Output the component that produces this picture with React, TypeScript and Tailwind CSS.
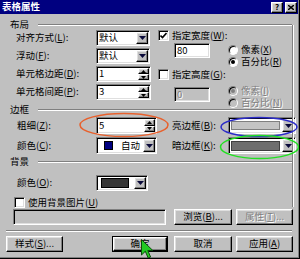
import React from 'react';

const sunken =
  'border border-t-[#808080] border-l-[#808080] border-r-white border-b-white shadow-[inset_1px_1px_0_#000,inset_-1px_-1px_0_#dfdfdf]';
const raised =
  'border border-t-white border-l-white border-r-black border-b-black shadow-[inset_-1px_-1px_0_#808080,inset_1px_1px_0_#dfdfdf]';
const disabledText = 'text-[#808080] [text-shadow:1px_1px_0_#fff]';

const L = ({ t, k, colon = true }: { t: string; k: string; colon?: boolean }) => (
  <span className="whitespace-nowrap">
    {t}(<span className="underline">{k}</span>){colon ? ':' : ''}
  </span>
);

const Etch = ({ w }: { w: string }) => (
  <div className={`h-[2px] border-t border-t-[#808080] border-b border-b-white ${w}`} />
);

const DownArrow = () => (
  <svg width="7" height="4" viewBox="0 0 7 4">
    <path d="M0 0h7L3.5 4z" fill="#0a0a3a" />
  </svg>
);

const DropBtn = () => (
  <div className={`${raised} bg-[#c0c0c0] w-[12px] h-full flex items-center justify-center shrink-0`}>
    <DownArrow />
  </div>
);

const Select = ({ w, children }: { w: string; children: React.ReactNode }) => (
  <div className={`${sunken} bg-white p-[1px] flex h-full ${w}`}>
    <div className="flex-1 flex items-center pl-[1px]">{children}</div>
    <DropBtn />
  </div>
);

const Spin = ({ w, v }: { w: string; v: string }) => (
  <div className={`${sunken} bg-white p-[1px] flex h-full ${w}`}>
    <div className="flex-1 flex items-center pl-[1px]">{v}</div>
    <div className="w-[11px] flex flex-col">
      <div className={`${raised} bg-[#c0c0c0] flex-1 flex items-center justify-center`}>
        <svg width="5" height="3" viewBox="0 0 5 3">
          <path d="M2.5 0L5 3H0z" fill="#000" />
        </svg>
      </div>
      <div className={`${raised} bg-[#c0c0c0] flex-1 flex items-center justify-center`}>
        <svg width="5" height="3" viewBox="0 0 5 3">
          <path d="M0 0h5L2.5 3z" fill="#000" />
        </svg>
      </div>
    </div>
  </div>
);

const Check = ({ on }: { on?: boolean }) => (
  <div className={`${sunken} bg-white w-[11px] h-[11px] flex items-center justify-center shrink-0`}>
    {on && (
      <svg width="7" height="7" viewBox="0 0 7 7">
        <path d="M0.5 3.5L2.5 5.5L6.5 1" stroke="#000" strokeWidth="1.6" fill="none" />
      </svg>
    )}
  </div>
);

const Radio = ({ on, dis }: { on?: boolean; dis?: boolean }) => (
  <div
    className={`w-[10px] h-[10px] rounded-full border border-t-[#808080] border-l-[#808080] border-r-white border-b-white shadow-[inset_1px_1px_0_#000] flex items-center justify-center shrink-0 ${
      dis ? 'bg-[#c0c0c0]' : 'bg-white'
    }`}
  >
    {on && <div className={`w-[4px] h-[4px] rounded-full ${dis ? 'bg-[#808080]' : 'bg-black'}`} />}
  </div>
);

const Btn = ({ w, children, dis, def }: { w: string; children: React.ReactNode; dis?: boolean; def?: boolean }) =>
  def ? (
    <div className={`border border-black h-full ${w}`}>
      <div className={`${raised} bg-[#c0c0c0] h-full flex items-center justify-center`}>{children}</div>
    </div>
  ) : (
    <div className={`${raised} bg-[#c0c0c0] h-full flex items-center justify-center ${w} ${dis ? disabledText : ''}`}>
      {children}
    </div>
  );

export default function App() {
  return (
    <div className="w-[300px] h-[259px] bg-[#c0c0c0] overflow-hidden relative border-r border-b border-black text-[9.5px] leading-none text-black font-['Noto_Sans_CJK_SC',sans-serif]">
      <div className="h-full border-r border-b border-[#808080] flex flex-col">
        {/* title bar */}
        <div className="h-[14px] bg-[#000080] flex items-center shrink-0">
          <span className="ml-[2px] text-white font-bold">表格属性</span>
          <div className="ml-auto mr-[1px] flex gap-[2px]">
            <div className={`${raised} bg-[#c0c0c0] w-[12px] h-[11px] flex items-center justify-center font-bold text-[8px]`}>
              ?
            </div>
            <div className={`${raised} bg-[#c0c0c0] w-[12px] h-[11px] flex items-center justify-center`}>
              <svg width="6" height="5" viewBox="0 0 6 5">
                <path d="M0 0L6 5M6 0L0 5" stroke="#000" strokeWidth="1.4" />
              </svg>
            </div>
          </div>
        </div>

        {/* 布局 */}
        <div className="mt-[6px] h-[10px] flex items-center shrink-0">
          <span className="ml-[10px] w-[28px]">布局</span>
          <Etch w="w-[254px]" />
        </div>
        <div className="flex h-[75px] shrink-0">
          <div className="w-[158px] pl-[16px] flex flex-col gap-[2px]">
            <div className="flex items-center h-[16px]">
              <div className="w-[80px]">
                <L t="对齐方式" k="L" />
              </div>
              <Select w="w-[54px]">默认</Select>
            </div>
            <div className="flex items-center h-[16px]">
              <div className="w-[80px]">
                <L t="浮动" k="F" />
              </div>
              <Select w="w-[54px]">默认</Select>
            </div>
            <div className="flex items-center h-[16px]">
              <div className="w-[80px]">
                <L t="单元格边距" k="D" />
              </div>
              <Spin w="w-[55px]" v="1" />
            </div>
            <div className="flex items-center h-[16px]">
              <div className="w-[80px]">
                <L t="单元格间距" k="P" />
              </div>
              <Spin w="w-[55px]" v="3" />
            </div>
          </div>
          <div className="flex flex-col">
            <div className="h-[11px] flex items-center gap-[3px]">
              <Check on />
              <L t="指定宽度" k="W" />
            </div>
            <div className="mt-[2px] flex">
              <div className={`${sunken} bg-white ml-[16px] w-[36px] h-[15px] flex items-center pl-[2px]`}>80</div>
              <div className="ml-[18px] mt-[1px] flex flex-col">
                <div className="h-[12px] flex items-center gap-[3px]">
                  <Radio />
                  <L t="像素" k="X" colon={false} />
                </div>
                <div className="h-[12px] flex items-center gap-[3px]">
                  <Radio on />
                  <L t="百分比" k="R" colon={false} />
                </div>
              </div>
            </div>
            <div className="mt-[1px] h-[11px] flex items-center gap-[3px]">
              <Check />
              <L t="指定高度" k="G" />
            </div>
            <div className="mt-[5px] flex">
              <div
                className={`${sunken} bg-[#c0c0c0] ml-[16px] mt-[2px] w-[36px] h-[15px] flex items-center pl-[2px] ${disabledText}`}
              >
                0
              </div>
              <div className={`ml-[18px] flex flex-col ${disabledText}`}>
                <div className="h-[12px] flex items-center gap-[3px]">
                  <Radio on dis />
                  <L t="像素" k="I" colon={false} />
                </div>
                <div className="h-[12px] flex items-center gap-[3px]">
                  <Radio dis />
                  <L t="百分比" k="N" colon={false} />
                </div>
              </div>
            </div>
          </div>
        </div>

        {/* 边框 */}
        <div className="h-[10px] flex items-center shrink-0">
          <span className="ml-[10px] w-[28px]">边框</span>
          <Etch w="w-[254px]" />
        </div>
        <div className="mt-[2px] h-[17px] flex items-center pl-[17px] shrink-0">
          <div className="w-[79px]">
            <L t="粗细" k="Z" />
          </div>
          <Spin w="w-[61px]" v="5" />
          <div className="ml-[15px] w-[56px]">
            <L t="亮边框" k="B" />
          </div>
          <Select w="w-[68px]">
            <div className="w-full h-[9px] mr-[2px] bg-[#c4c4c4] border border-[#808080]" />
          </Select>
        </div>
        <div className="mt-[3px] h-[17px] flex items-center pl-[17px] shrink-0">
          <div className="w-[79px]">
            <L t="颜色" k="C" />
          </div>
          <Select w="w-[61px]">
            <div className="ml-[5px] w-[9px] h-[9px] bg-[#000080] border border-black" />
            <span className="ml-[8px]">自动</span>
          </Select>
          <div className="ml-[15px] w-[56px]">
            <L t="暗边框" k="K" />
          </div>
          <Select w="w-[68px]">
            <div className="w-full h-[10px] mr-[2px] bg-[#6e6e6e] border border-[#404040]" />
          </Select>
        </div>

        {/* 背景 */}
        <div className="mt-[3px] h-[10px] flex items-center shrink-0">
          <span className="ml-[10px] w-[28px]">背景</span>
          <Etch w="w-[254px]" />
        </div>
        <div className="mt-[8px] h-[16px] flex items-center pl-[17px] shrink-0">
          <div className="w-[79px]">
            <L t="颜色" k="O" />
          </div>
          <Select w="w-[52px]">
            <div className="ml-[2px] w-[28px] h-[10px] bg-[#353535] border border-black" />
          </Select>
        </div>
        <div className="mt-[6px] h-[11px] flex items-center gap-[3px] pl-[14px] shrink-0">
          <Check />
          <L t="使用背景图片" k="U" colon={false} />
        </div>
        <div className="mt-[1px] h-[16px] flex pl-[13px] shrink-0">
          <div className={`${sunken} bg-[#c0c0c0] w-[153px] h-full`} />
          <div className="ml-[8px] h-full">
            <Btn w="w-[58px]">
              <L t="浏览" k="B" colon={false} />
              ...
            </Btn>
          </div>
          <div className="ml-[4px] h-full">
            <Btn w="w-[57px]" dis>
              <L t="属性" k="T" colon={false} />
              ...
            </Btn>
          </div>
        </div>

        <div className="mt-[5px] pl-[6px] shrink-0">
          <Etch w="w-[286px]" />
        </div>

        <div className="mt-[4px] h-[16px] flex pl-[6px] shrink-0">
          <Btn w="w-[57px]">
            <L t="样式" k="S" colon={false} />
            ...
          </Btn>
          <div className="ml-[49px] h-full">
            <Btn w="w-[56px]" def>
              确定
            </Btn>
          </div>
          <div className="ml-[6px] h-full">
            <Btn w="w-[58px]">取消</Btn>
          </div>
          <div className="ml-[4px] h-full">
            <Btn w="w-[57px]">
              <L t="应用" k="A" colon={false} />
            </Btn>
          </div>
        </div>
      </div>

      {/* group frame right edge */}
      <div className="absolute left-[292px] top-[25px] w-[2px] h-[182px] border-l border-l-[#808080] border-r border-r-white" />

      {/* annotation ellipses */}
      <svg className="absolute left-0 top-0 pointer-events-none" width="300" height="259">
        <ellipse cx="124" cy="125" rx="44" ry="11.5" fill="none" stroke="#e8602c" strokeWidth="1.5" />
        <ellipse cx="259" cy="127" rx="38" ry="9.5" fill="none" stroke="#2a2ac8" strokeWidth="1.5" />
        <ellipse cx="259.5" cy="147" rx="39" ry="11.5" fill="none" stroke="#22e022" strokeWidth="1.5" />
      </svg>

      {/* cursor */}
      <svg className="absolute left-[141px] top-[239px]" width="13" height="20" viewBox="0 0 13 20">
        <path d="M0.5 0.5V16L4.3 12.3L7.2 19L9.6 18L6.8 11.5H11.8Z" fill="#22c922" stroke="#0b4a0b" strokeWidth="1" />
      </svg>
    </div>
  );
}
